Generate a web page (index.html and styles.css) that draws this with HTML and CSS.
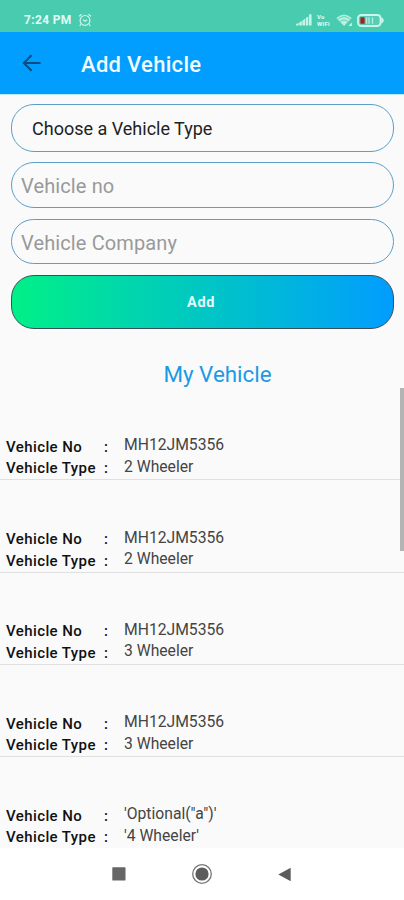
FILE: index.html
```html
<!doctype html>
<html lang="en">
  <head>
    <meta charset="utf-8">
    <title>Add Vehicle</title>
    <link rel="stylesheet" href="styles.css">
  </head>
  <body>
    <div class="status-bar">
      <span class="time">7:24 PM</span>
      <svg class="alarm" width="14" height="14" viewBox="0 0 14 14" fill="none" stroke="#d2f5e8" stroke-width="1.2">
        <circle cx="7" cy="7.4" r="4.9" />
        <path d="M1 3.4L3.6 1.2M13 3.4L10.4 1.2M2.9 11.3L1.7 12.8M11.1 11.3L12.3 12.8M5 6.6L7 8.2L9.2 6.8" />
      </svg>
      <div class="status-icons">
        <svg width="16" height="12" viewBox="0 0 16 12" fill="#c2f3e5">
          <path d="M0 11.5V10L2.6 9V11.5zM3.2 11.5V8.4L5.8 7V11.5zM6.4 11.5V6.4L9 4.8V11.5zM9.7 11.5V4L12.3 2.4V11.5zM13 11.5V1Q13 0 14.3 0T15.6 1V11.5z" />
        </svg>
        <div class="vowifi"><span>Vo</span><span>WiFi</span></div>
        <svg class="wifi" width="17" height="13" viewBox="0 0 17 13">
          <path d="M0.3 4Q8 -3 15.7 4L8 12z" fill="#b9f1e1" />
          <path d="M1.8 5.2Q8 0 14.2 5.2M4 7.6Q8 4.4 12 7.6" fill="none" stroke="#49cbb0" stroke-width="0.8" />
          <path d="M12.4 12L15.8 8.6V12z" fill="#d2f5e8" />
        </svg>
        <svg width="27" height="13" viewBox="0 0 27 13">
          <rect x="1" y="1" width="22.5" height="11" rx="3.2" fill="#58cdb5" stroke="#c9f7eb" stroke-width="1.8" />
          <path d="M24.2 3.3Q26.8 4.4 26.8 6.5T24.2 9.7z" fill="#c9f7eb" />
          <rect x="3.4" y="3.3" width="4.2" height="6.4" fill="#a3221f" />
          <path d="M9.5 3.3V9.7M12 3.3V9.7M15.5 3.3V9.7" stroke="#b3eee0" stroke-width="1.3" />
        </svg>
      </div>
    </div>

    <header class="toolbar">
      <svg class="back" width="20" height="18" viewBox="0 0 20 18" fill="none" stroke="#0b4f82" stroke-width="2">
        <path d="M18.5 9H2M9.5 1.3L1.8 9L9.5 16.7" />
      </svg>
      <h1>Add Vehicle</h1>
    </header>

    <main>
      <form class="vehicle-form">
        <div class="field select">Choose a Vehicle Type</div>
        <input class="field" type="text" placeholder="Vehicle no">
        <input class="field" type="text" placeholder="Vehicle Company">
        <button class="add-button" type="button">Add</button>
      </form>

      <h2>My Vehicle</h2>

      <div class="vehicle-list">
        <div class="vehicle">
          <div class="label">Vehicle No</div><div class="colon">:</div><div class="value">MH12JM5356</div>
          <div class="label">Vehicle Type</div><div class="colon">:</div><div class="value">2 Wheeler</div>
        </div>
        <div class="vehicle">
          <div class="label">Vehicle No</div><div class="colon">:</div><div class="value">MH12JM5356</div>
          <div class="label">Vehicle Type</div><div class="colon">:</div><div class="value">2 Wheeler</div>
        </div>
        <div class="vehicle">
          <div class="label">Vehicle No</div><div class="colon">:</div><div class="value">MH12JM5356</div>
          <div class="label">Vehicle Type</div><div class="colon">:</div><div class="value">3 Wheeler</div>
        </div>
        <div class="vehicle">
          <div class="label">Vehicle No</div><div class="colon">:</div><div class="value">MH12JM5356</div>
          <div class="label">Vehicle Type</div><div class="colon">:</div><div class="value">3 Wheeler</div>
        </div>
        <div class="vehicle">
          <div class="label">Vehicle No</div><div class="colon">:</div><div class="value">'Optional("a")'</div>
          <div class="label">Vehicle Type</div><div class="colon">:</div><div class="value">'4 Wheeler'</div>
        </div>
        <div class="scrollbar"></div>
      </div>
    </main>

    <nav class="nav-bar">
      <svg width="14" height="14" viewBox="0 0 14 14"><rect x="0.3" y="0.3" width="13.2" height="13.2" rx="0.6" fill="#666" /></svg>
      <svg width="22" height="22" viewBox="0 0 22 22">
        <circle cx="11" cy="11" r="9.3" fill="none" stroke="#777" stroke-width="1.3" />
        <circle cx="11" cy="11" r="6.6" fill="#5c5c5c" />
      </svg>
      <svg width="14" height="15" viewBox="0 0 14 15"><path d="M0.3 7.5L12.7 0.8V14.2z" fill="#5c5c5c" /></svg>
    </nav>
  </body>
</html>
```
FILE: styles.css
```css
* {
  box-sizing: border-box;
  margin: 0;
  padding: 0;
}

body {
  width: 404px;
  height: 900px;
  overflow: hidden;
  display: flex;
  flex-direction: column;
  font-family: Roboto, sans-serif;
  background: #fafafa;
}

svg {
  display: block;
  flex: none;
}

.status-bar {
  flex: none;
  height: 32px;
  padding: 8px 20px 0 24px;
  display: flex;
  align-items: center;
  background: #49cbb0;
  color: #e2faf3;
}

.time {
  font-size: 12px;
  font-weight: 700;
  letter-spacing: 0.35px;
}

.alarm {
  margin-left: 6px;
}

.status-icons {
  margin-left: auto;
  display: flex;
  align-items: center;
}

.vowifi {
  width: 15px;
  margin: 0 4px 0 5px;
  display: flex;
  flex-direction: column;
  font-size: 6px;
  font-weight: 700;
  line-height: 7px;
  letter-spacing: 0.3px;
}

.wifi {
  margin-right: 4px;
}

.toolbar {
  flex: none;
  height: 63px;
  padding: 0 22px;
  display: flex;
  align-items: center;
  background: #019dff;
  border-bottom: 1px solid #b9e8fb;
}

.toolbar h1 {
  margin-left: 39px;
  padding-top: 2px;
  font-size: 22px;
  font-weight: 500;
  letter-spacing: 0.3px;
  color: #f2fbff;
}

main {
  flex: 1;
  min-height: 0;
  overflow: hidden;
}

.vehicle-form {
  padding: 9px 10px 0 11px;
  display: flex;
  flex-direction: column;
}

.field {
  height: 45.5px;
  margin-bottom: 11px;
  padding: 3px 9px 0;
  border: 1px solid #5b9fc8;
  border-radius: 23px;
  background: transparent;
  font-family: inherit;
  font-size: 20px;
  letter-spacing: 0.12px;
  color: #222;
}

.field::placeholder {
  color: #999;
}

.field.select {
  height: 48px;
  margin-bottom: 10px;
  padding: 0 20px;
  font-size: 18px;
  line-height: 48px;
  letter-spacing: 0;
}

.add-button {
  height: 54px;
  padding-right: 3px;
  border: 1px solid #35505a;
  border-radius: 23px;
  background: linear-gradient(to right, #00f087, #019dff);
  font-family: inherit;
  font-size: 14.5px;
  font-weight: 700;
  letter-spacing: 0.6px;
  color: #e6fbfb;
}

h2 {
  height: 59px;
  padding: 30px 0 0 31px;
  font-size: 22.4px;
  font-weight: 400;
  line-height: 30px;
  text-align: center;
  color: #1a9be6;
}

.vehicle-list {
  position: relative;
}

.vehicle {
  height: 92.3px;
  padding: 0 6px;
  display: grid;
  grid-template-columns: 98px 20px 1fr;
  grid-template-rows: 21.5px 21.5px;
  align-content: end;
  border-bottom: 1px solid #e0e0e0;
  line-height: 21.5px;
}

.label,
.colon {
  margin-top: 0.5px;
  font-size: 15px;
  font-weight: 500;
  letter-spacing: 0.4px;
  color: #111;
}

.value {
  margin-top: -2px;
  font-size: 15.7px;
  color: #444;
}

.scrollbar {
  position: absolute;
  top: 0;
  right: 0;
  width: 4px;
  height: 163px;
  background: #b4b4b4;
}

.nav-bar {
  flex: none;
  height: 52px;
  padding: 0 112px;
  display: flex;
  align-items: center;
  justify-content: space-between;
  background: #fff;
}
```
